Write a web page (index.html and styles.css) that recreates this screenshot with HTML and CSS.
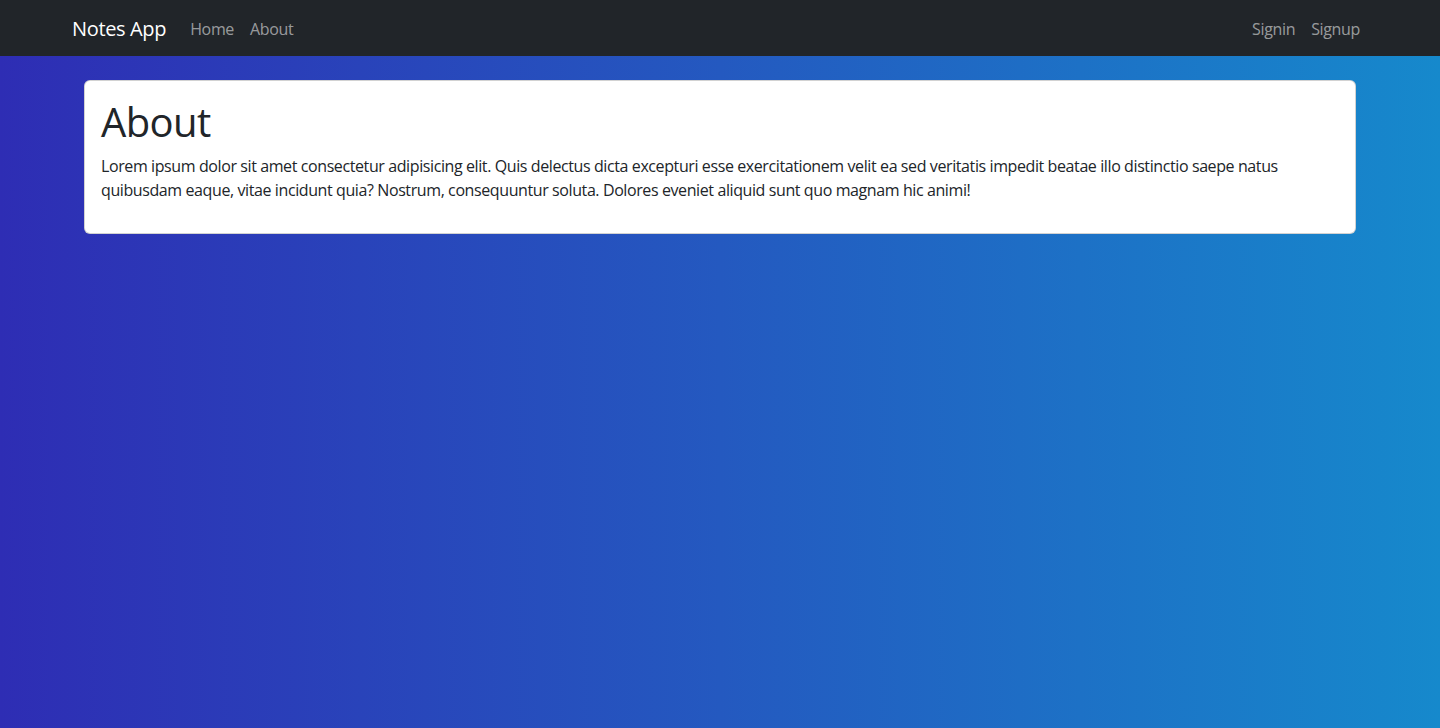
FILE: index.html
```html
<!DOCTYPE html>
<html lang="en">
<head>
<meta charset="utf-8">
<title>Notes App</title>
<link rel="stylesheet" href="styles.css">
</head>
<body>
<nav class="navbar">
  <div class="nav-container">
    <a class="brand" href="#">Notes App</a>
    <ul class="nav-links">
      <li><a href="#">Home</a></li>
      <li><a href="#">About</a></li>
    </ul>
    <ul class="nav-links nav-right">
      <li><a href="#">Signin</a></li>
      <li><a href="#">Signup</a></li>
    </ul>
  </div>
</nav>
<main class="container">
  <div class="row">
    <div class="col">
      <div class="card">
        <div class="card-body">
          <h1>About</h1>
          <p>Lorem ipsum dolor sit amet consectetur adipisicing elit. Quis delectus dicta excepturi esse exercitationem velit ea sed veritatis impedit beatae illo distinctio saepe natus quibusdam eaque, vitae incidunt quia? Nostrum, consequuntur soluta. Dolores eveniet aliquid sunt quo magnam hic animi!</p>
        </div>
      </div>
    </div>
  </div>
</main>
</body>
</html>
```
FILE: styles.css
```css
* { box-sizing: border-box; }
html, body { height: 100%; }
body {
  margin: 0;
  font-family: "Open Sans", "Noto Sans", sans-serif;
  font-size: 16px;
  line-height: 1.5;
  letter-spacing: -0.35px;
  color: #212529;
  background: linear-gradient(to right, #2e2db4, #2459c0 50%, #1689cc);
  min-height: 728px;
}
.navbar {
  background: #212529;
  height: 56px;
  display: flex;
  align-items: center;
  padding-top: 2px;
}
.nav-container {
  width: 1320px;
  margin: 0 auto;
  padding: 0 12px;
  display: flex;
  align-items: center;
}
.brand {
  color: #fff;
  text-decoration: none;
  font-size: 20px;
  line-height: 30px;
  margin-right: 16px;
  letter-spacing: -0.35px;
}
.nav-links {
  list-style: none;
  margin: 0;
  padding: 0;
  display: flex;
}
.nav-links a {
  display: block;
  padding: 8px;
  color: rgba(255,255,255,0.55);
  text-decoration: none;
  font-size: 16px;
}
.nav-right { margin-left: auto; }
.container {
  width: 1320px;
  margin: 24px auto 0;
  padding: 0 12px;
}
.col { padding: 0 12px; }
.card {
  background: #fff;
  border: 1px solid rgba(0,0,0,0.175);
  border-radius: 6px;
}
.card-body { padding: 17px 16px 16px; }
h1 {
  margin: 0 0 8px;
  font-size: 40px;
  font-weight: 400;
  line-height: 1.2;
  letter-spacing: -0.6px;
}
p {
  margin: 0 0 15px;
  letter-spacing: -0.4px;
}
```
